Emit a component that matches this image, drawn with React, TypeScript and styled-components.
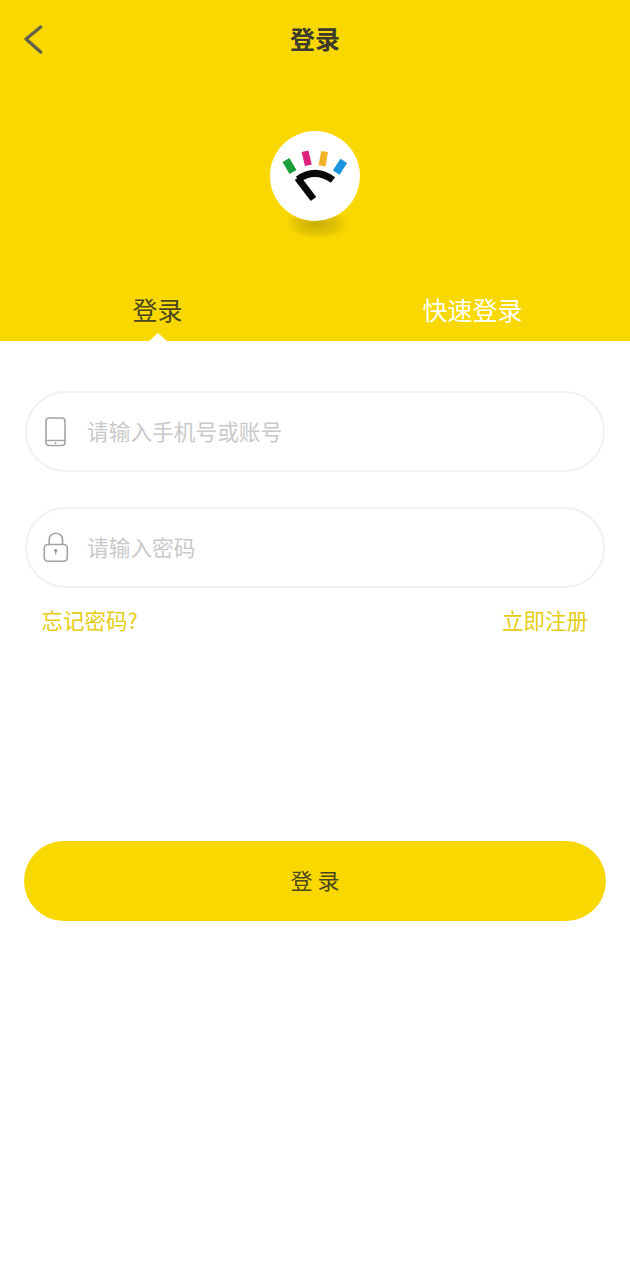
import React from 'react'
import styled, { createGlobalStyle } from 'styled-components'

const Global = createGlobalStyle`
    html, body {
        margin: 0;
        padding: 0;
        background: #fff;
    }
    * {
        box-sizing: border-box;
    }
    body {
        font-family: "Noto Sans CJK SC", "Noto Sans", sans-serif;
    }
`
const Page = styled.div`
    width: 630px;
    height: 1280px;
    background: #fff;
`
const Header = styled.header`
    height: 341px;
    background: #f9d800;
    display: flex;
    flex-direction: column;
`
const Navbar = styled.div`
    height: 80px;
    padding-left: 23px;
    display: grid;
    grid-template-columns: 1fr auto 1fr;
    align-items: center;
`
const Backbutton = styled.div`
    width: 22px;
    height: 32px;
`
const Title = styled.div`
    font-size: 25px;
    font-weight: 700;
    color: #3b3a2c;
    margin-left: -23px;
    padding-bottom: 5px;
`
const Logowrapper = styled.div`
    position: relative;
    width: 90px;
    height: 90px;
    margin: 51px auto 0 auto;
    &::after {
        content: '';
        position: absolute;
        left: 15px;
        top: 84px;
        width: 64px;
        height: 24px;
        background: radial-gradient(ellipse at 50% 35%, rgba(120, 105, 20, 0.38) 0%, rgba(120, 105, 20, 0.18) 45%, rgba(120, 105, 20, 0) 72%);
    }
`
const Logo = styled.div`
    position: relative;
    z-index: 1;
    width: 90px;
    height: 90px;
    border-radius: 50%;
    background: #fff;
`
const Tabs = styled.div`
    margin-top: 60px;
    height: 60px;
    display: grid;
    grid-template-columns: 1fr 1fr;
`
const Tab = styled.div<{ $active?: boolean }>`
    position: relative;
    display: flex;
    align-items: center;
    justify-content: center;
    padding-bottom: 4px;
    font-size: 25px;
    color: ${(p) => (p.$active ? '#4a4620' : '#fff')};
    &::after {
        content: '';
        display: ${(p) => (p.$active ? 'block' : 'none')};
        position: absolute;
        left: 50%;
        bottom: 0;
        margin-left: -9px;
        border-left: 9px solid transparent;
        border-right: 9px solid transparent;
        border-bottom: 8px solid #fff;
    }
`
const Form = styled.div`
    padding: 50px 25px 0 25px;
    display: flex;
    flex-direction: column;
`
const Inputrow = styled.label`
    height: 81px;
    border: 2px solid #f1f1f1;
    border-radius: 41px;
    display: flex;
    align-items: center;
    padding-left: 16px;
    margin-bottom: 35px;
    &:last-of-type {
        margin-bottom: 0;
    }
`
const Iconwrapper = styled.div`
    width: 29px;
    height: 34px;
    margin-right: 15px;
    flex-shrink: 0;
`
const Input = styled.input`
    flex: 1;
    min-width: 0;
    border: none;
    outline: none;
    background: transparent;
    padding: 0;
    margin-bottom: 3px;
    font-family: inherit;
    font-size: 21.7px;
    color: #333;
    &::placeholder {
        color: #c9c9c9;
        opacity: 1;
    }
`
const Links = styled.div`
    height: 33px;
    margin-top: 17px;
    padding: 0 17px 4px 16.5px;
    display: flex;
    justify-content: space-between;
    align-items: center;
`
const Linktext = styled.a`
    font-size: 21.5px;
    color: #e5cd14;
`
const Submit = styled.button`
    margin: 202.5px 0 0 -1px;
    height: 80.5px;
    width: 582px;
    border: none;
    border-radius: 41px;
    background: #f9d800;
    color: #4a4620;
    font-family: inherit;
    font-size: 22px;
    padding: 0 0 4px 0;
`

const Backicon = () => (
    <svg width="22" height="32" viewBox="0 0 22 32" fill="none">
        <path d="M17.7 3 L3 15 L17.7 28" stroke="#66624a" strokeWidth="3.4" strokeLinecap="round" strokeLinejoin="round" />
    </svg>
)

const Logomark = () => (
    <svg width="90" height="90" viewBox="0 0 90 90">
        <rect x="15.5" y="28" width="8" height="14" fill="#1e9e3a" transform="rotate(-30 19.5 35)" />
        <rect x="33.2" y="20" width="7" height="14.5" fill="#de1f7c" transform="rotate(-13 36.7 27.3)" />
        <rect x="49.8" y="20.4" width="7" height="14.5" fill="#f2b32a" transform="rotate(10 53.3 27.7)" />
        <rect x="66" y="28.7" width="8" height="14" fill="#1b95e0" transform="rotate(33 70 35.7)" />
        <path d="M28 48.5 Q45 36 63 49" fill="none" stroke="#0a0a0a" strokeWidth="7" />
        <path d="M27.5 47 L43.5 68" fill="none" stroke="#0a0a0a" strokeWidth="7" />
    </svg>
)

const Phoneicon = () => (
    <svg width="29" height="34" viewBox="0 0 29 34" fill="none" stroke="#a3a3a3">
        <rect x="3" y="3" width="19" height="27.5" rx="3" strokeWidth="1.6" />
        <path d="M3 25.5 H22" strokeWidth="1.4" />
        <circle cx="12.6" cy="28" r="0.9" fill="#a3a3a3" stroke="none" />
    </svg>
)

const Lockicon = () => (
    <svg width="29" height="34" viewBox="0 0 29 34" fill="none" stroke="#a3a3a3">
        <rect x="1.3" y="13.5" width="23" height="16.7" rx="3.5" strokeWidth="1.6" />
        <path d="M6.2 13.5 V9 C6.2 0 19.6 0 19.6 9 V13.5" strokeWidth="1.6" />
        <circle cx="12.7" cy="19.5" r="1.6" fill="#8c8c8c" stroke="none" />
        <path d="M12.7 20 V23.5" strokeWidth="1.4" />
    </svg>
)

const Login: React.FC = () => {
    return (
        <Page>
            <Global />
            <Header>
                <Navbar>
                    <Backbutton><Backicon /></Backbutton>
                    <Title>登录</Title>
                </Navbar>
                <Logowrapper>
                    <Logo><Logomark /></Logo>
                </Logowrapper>
                <Tabs>
                    <Tab $active>登录</Tab>
                    <Tab>快速登录</Tab>
                </Tabs>
            </Header>
            <Form>
                <Inputrow>
                    <Iconwrapper><Phoneicon /></Iconwrapper>
                    <Input placeholder="请输入手机号或账号" />
                </Inputrow>
                <Inputrow>
                    <Iconwrapper><Lockicon /></Iconwrapper>
                    <Input type="password" placeholder="请输入密码" />
                </Inputrow>
                <Links>
                    <Linktext>忘记密码?</Linktext>
                    <Linktext>立即注册</Linktext>
                </Links>
                <Submit>登 录</Submit>
            </Form>
        </Page>
    )
}

export default Login
